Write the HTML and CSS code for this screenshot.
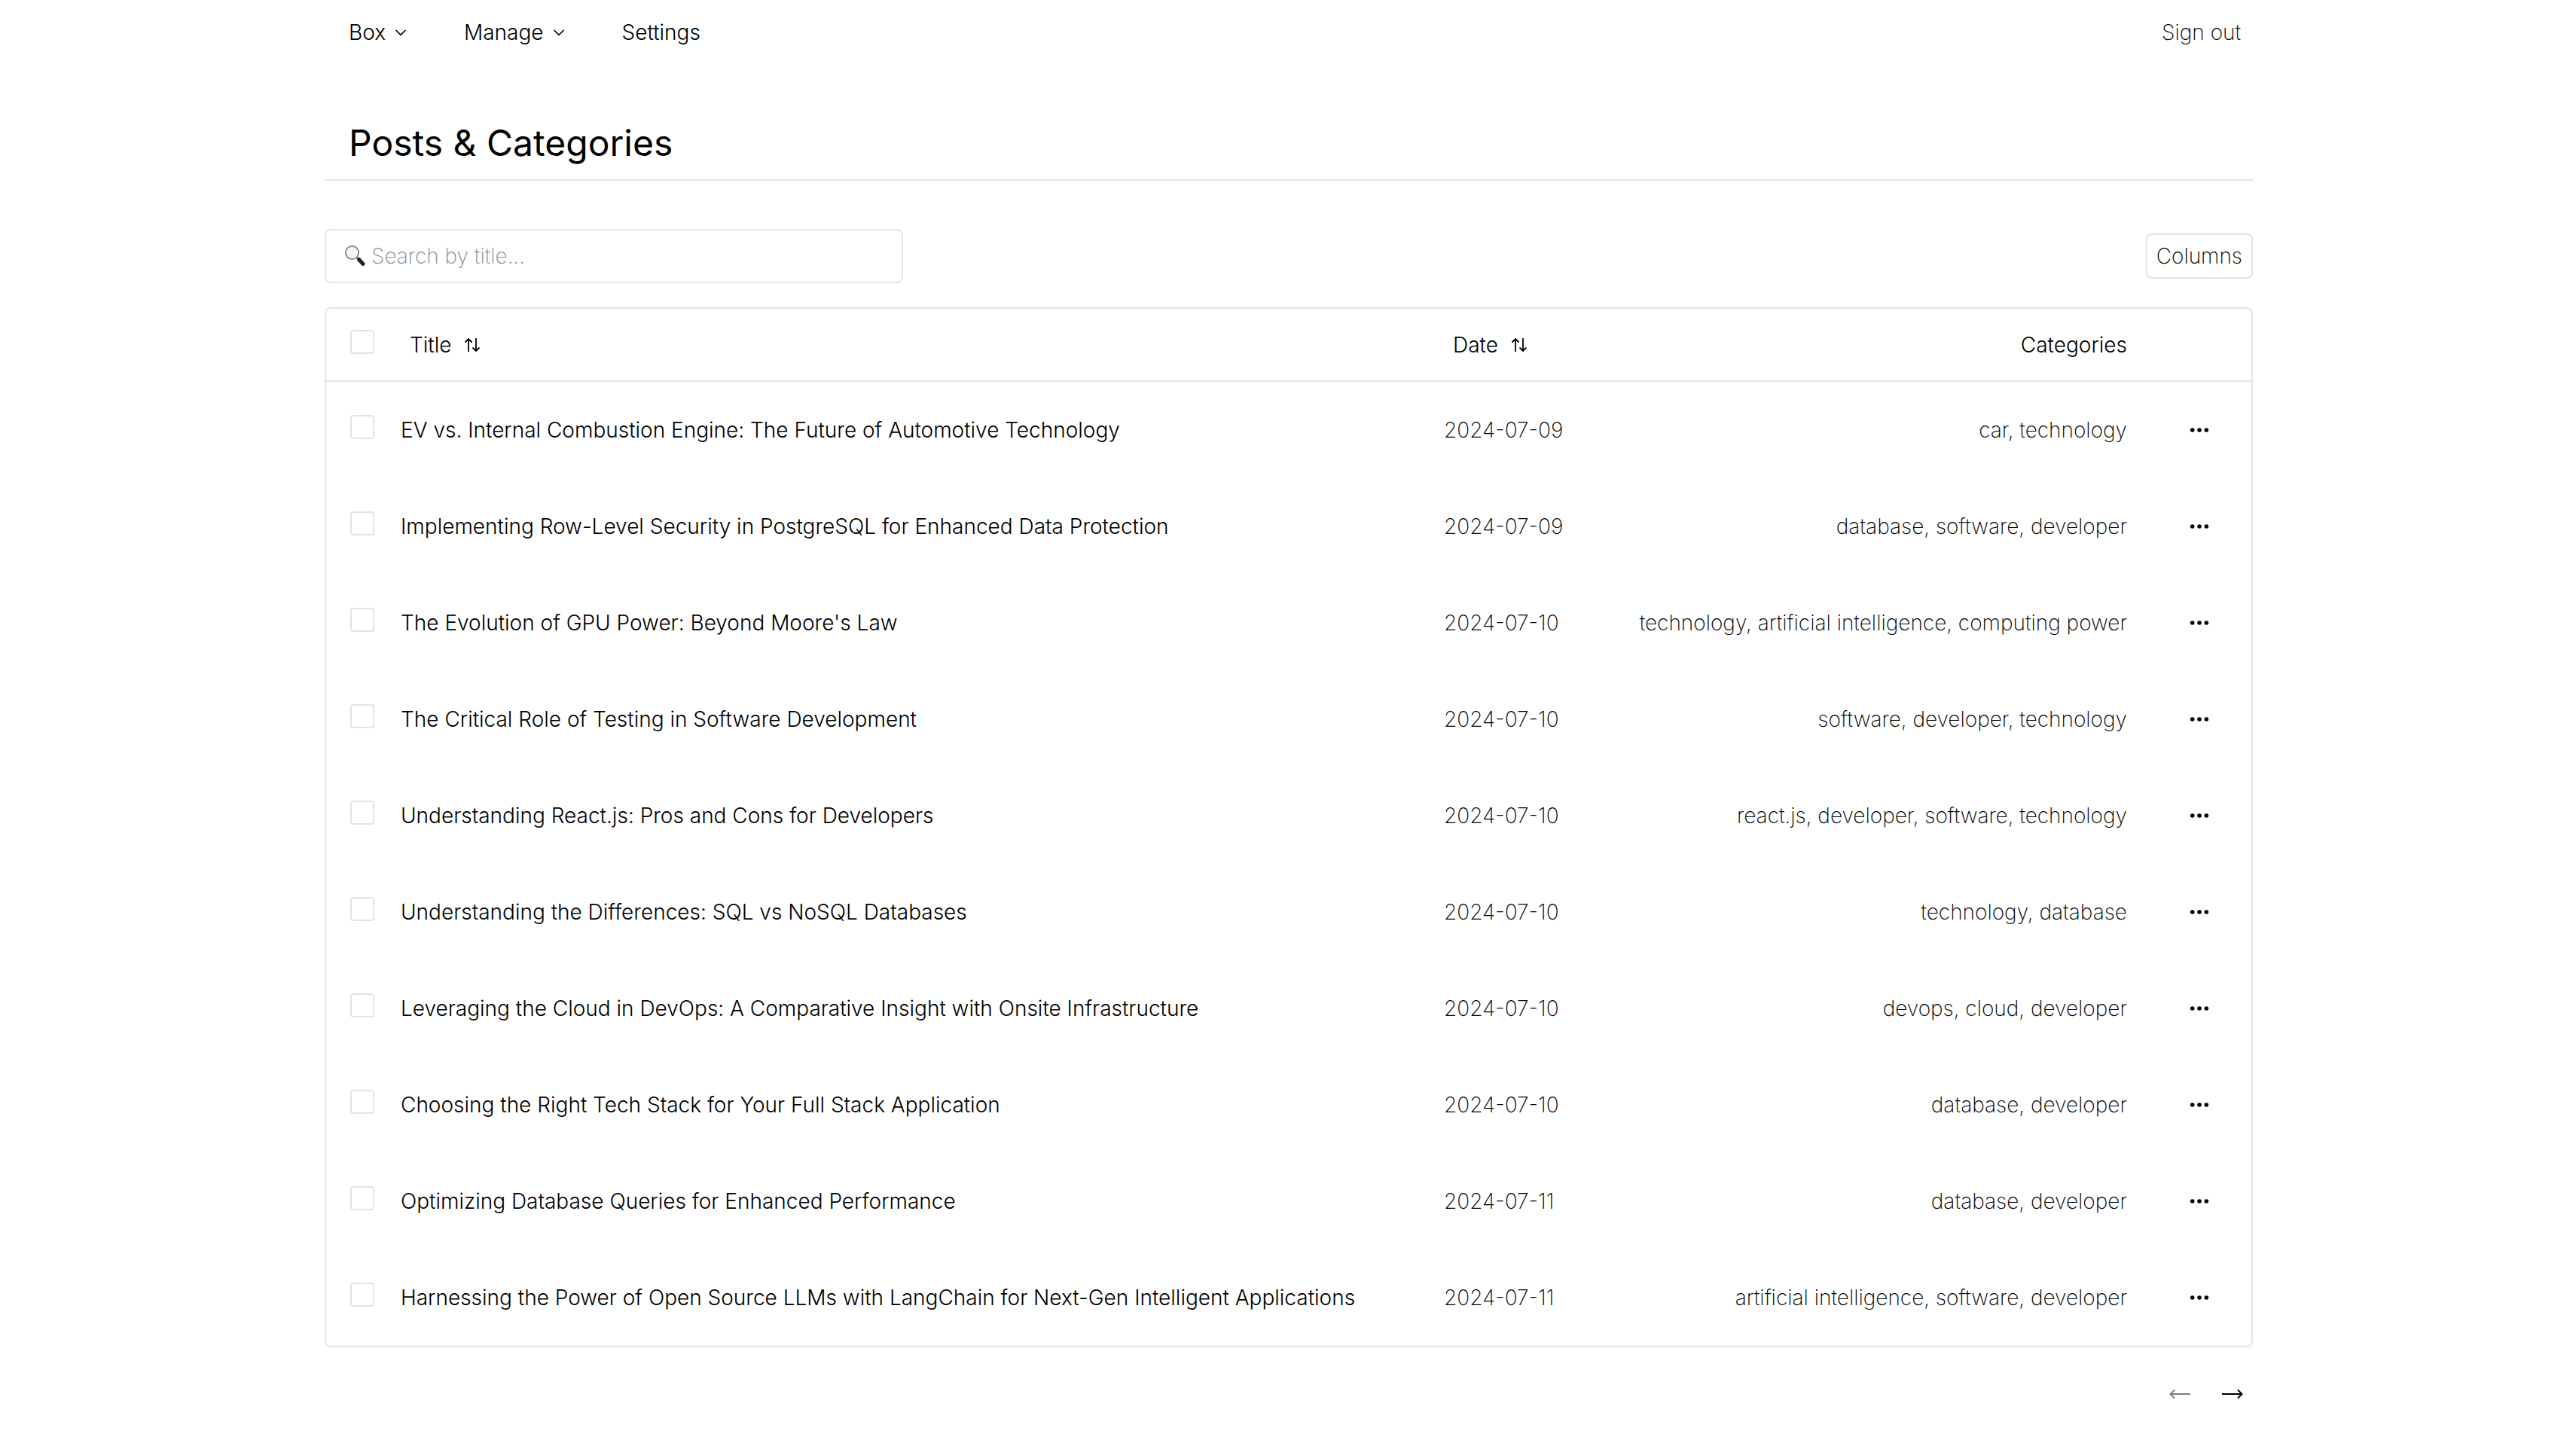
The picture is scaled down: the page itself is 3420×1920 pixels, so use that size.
FILE: index.html
```html
<!DOCTYPE html>
<html lang="en">
<head>
<meta charset="utf-8">
<title>Posts &amp; Categories</title>
<link rel="stylesheet" href="styles.css">
</head>
<body>
<svg class="sprite" aria-hidden="true">
  <symbol id="chevron" viewBox="0 0 24 24"><path d="m5.500 9 6.500 6.300L18.500 9" fill="none" stroke="currentColor" stroke-width="1.700"/></symbol>
  <symbol id="sort" viewBox="0 0 24 24"><path d="M7 21V4M2.500 8.500 7 4l4.500 4.500M17 3v17M12.500 15.500 17 20l4.500-4.500" fill="none" stroke="currentColor" stroke-width="1.800"/></symbol>
  <symbol id="dots" viewBox="0 0 30 30"><g fill="currentColor"><circle cx="5.700" cy="15" r="2.800"/><circle cx="15" cy="15" r="2.800"/><circle cx="24.300" cy="15" r="2.800"/></g></symbol>
</svg>
<div class="page">
  <header class="topbar">
    <nav class="menu">
      <button class="menu-item" type="button">Box <svg class="chevron"><use href="#chevron"/></svg></button>
      <button class="menu-item" type="button">Manage <svg class="chevron"><use href="#chevron"/></svg></button>
      <a class="menu-item" href="#settings">Settings</a>
    </nav>
    <button class="signout" type="button">Sign out</button>
  </header>
  <main>
    <h1 class="heading">Posts &amp; Categories</h1>
    <div class="toolbar">
      <label class="search">
        <svg class="lens" viewBox="0 0 28 28" aria-hidden="true">
          <path d="m17 16 3 3" stroke="#8b9297" stroke-width="3"/>
          <path d="m19.500 18.500 5.500 6" stroke="#202427" stroke-width="5" stroke-linecap="round"/>
          <circle cx="10.500" cy="9.500" r="8.700" fill="#f4f5f5" stroke="#7d8891" stroke-width="1.800"/>
        </svg>
        <input class="search-input" type="text" placeholder="Search by title..." aria-label="Search by title">
      </label>
      <button class="columns" type="button">Columns</button>
    </div>
    <div class="table-frame">
      <table class="posts">
        <colgroup><col class="col-check"><col class="col-title"><col class="col-date"><col><col class="col-actions"></colgroup>
        <thead>
          <tr>
            <th><input class="check" type="checkbox" aria-label="Select all"></th>
            <th><button class="sort" type="button">Title <svg class="sort-icon"><use href="#sort"/></svg></button></th>
            <th><button class="sort" type="button">Date <svg class="sort-icon"><use href="#sort"/></svg></button></th>
            <th class="categories">Categories</th>
            <th></th>
          </tr>
        </thead>
        <tbody>
          <tr><td><input class="check" type="checkbox" aria-label="Select row"></td><td class="title">EV vs. Internal Combustion Engine: The Future of Automotive Technology</td><td>2024-07-09</td><td class="categories">car, technology</td><td><button class="more" type="button" aria-label="Actions"><svg class="dots"><use href="#dots"/></svg></button></td></tr>
          <tr><td><input class="check" type="checkbox" aria-label="Select row"></td><td class="title">Implementing Row-Level Security in PostgreSQL for Enhanced Data Protection</td><td>2024-07-09</td><td class="categories">database, software, developer</td><td><button class="more" type="button" aria-label="Actions"><svg class="dots"><use href="#dots"/></svg></button></td></tr>
          <tr><td><input class="check" type="checkbox" aria-label="Select row"></td><td class="title">The Evolution of GPU Power: Beyond Moore's Law</td><td>2024-07-10</td><td class="categories">technology, artificial intelligence, computing power</td><td><button class="more" type="button" aria-label="Actions"><svg class="dots"><use href="#dots"/></svg></button></td></tr>
          <tr><td><input class="check" type="checkbox" aria-label="Select row"></td><td class="title">The Critical Role of Testing in Software Development</td><td>2024-07-10</td><td class="categories">software, developer, technology</td><td><button class="more" type="button" aria-label="Actions"><svg class="dots"><use href="#dots"/></svg></button></td></tr>
          <tr><td><input class="check" type="checkbox" aria-label="Select row"></td><td class="title">Understanding React.js: Pros and Cons for Developers</td><td>2024-07-10</td><td class="categories">react.js, developer, software, technology</td><td><button class="more" type="button" aria-label="Actions"><svg class="dots"><use href="#dots"/></svg></button></td></tr>
          <tr><td><input class="check" type="checkbox" aria-label="Select row"></td><td class="title">Understanding the Differences: SQL vs NoSQL Databases</td><td>2024-07-10</td><td class="categories">technology, database</td><td><button class="more" type="button" aria-label="Actions"><svg class="dots"><use href="#dots"/></svg></button></td></tr>
          <tr><td><input class="check" type="checkbox" aria-label="Select row"></td><td class="title">Leveraging the Cloud in DevOps: A Comparative Insight with Onsite Infrastructure</td><td>2024-07-10</td><td class="categories">devops, cloud, developer</td><td><button class="more" type="button" aria-label="Actions"><svg class="dots"><use href="#dots"/></svg></button></td></tr>
          <tr><td><input class="check" type="checkbox" aria-label="Select row"></td><td class="title">Choosing the Right Tech Stack for Your Full Stack Application</td><td>2024-07-10</td><td class="categories">database, developer</td><td><button class="more" type="button" aria-label="Actions"><svg class="dots"><use href="#dots"/></svg></button></td></tr>
          <tr><td><input class="check" type="checkbox" aria-label="Select row"></td><td class="title">Optimizing Database Queries for Enhanced Performance</td><td>2024-07-11</td><td class="categories">database, developer</td><td><button class="more" type="button" aria-label="Actions"><svg class="dots"><use href="#dots"/></svg></button></td></tr>
          <tr><td><input class="check" type="checkbox" aria-label="Select row"></td><td class="title">Harnessing the Power of Open Source LLMs with LangChain for Next-Gen Intelligent Applications</td><td>2024-07-11</td><td class="categories">artificial intelligence, software, developer</td><td><button class="more" type="button" aria-label="Actions"><svg class="dots"><use href="#dots"/></svg></button></td></tr>
        </tbody>
      </table>
    </div>
    <div class="pager">
      <button class="page-button" type="button" disabled aria-label="Previous page"><svg class="arrow" viewBox="0 0 30 14"><path d="M29 7H2M8 1.500 2.500 7 8 12.500" fill="none" stroke="currentColor" stroke-width="2"/></svg></button>
      <button class="page-button" type="button" aria-label="Next page"><svg class="arrow" viewBox="0 0 30 14"><path d="M1 7h27M22 1.500 27.500 7 22 12.500" fill="none" stroke="currentColor" stroke-width="2"/></svg></button>
    </div>
  </main>
</div>
</body>
</html>
```
FILE: styles.css
```css
* { box-sizing: border-box; }
body {
  margin: 0;
  padding-left: 2px;
  background: #fff;
  color: #000;
  font: 200 28px/40px Inter, "Liberation Sans", sans-serif;
}
button, input { margin: 0; padding: 0; border: 0; background: none; font: inherit; color: inherit; }
a { color: inherit; text-decoration: none; }
svg { display: block; flex: none; }
.sprite { position: absolute; width: 0; height: 0; }
.page { max-width: 2560px; margin: 0 auto; }

.topbar { display: flex; justify-content: space-between; align-items: center; height: 86px; padding: 0 16px 0 32px; }
.menu { display: flex; gap: 72px; }
.menu-item { display: flex; align-items: center; gap: 8px; font-weight: 300; }
.chevron { width: 24px; height: 24px; }

.heading { margin: 0; padding: 68px 32px 12px; border-bottom: 2px solid #e4e4e7; font-size: 48px; line-height: 72px; font-weight: 400; }

.toolbar { display: flex; justify-content: space-between; align-items: center; margin: 64px 0 32px; }
.search { display: flex; align-items: center; width: 30%; height: 72px; padding: 0 24px; border: 2px solid #e4e4e7; border-radius: 8px; }
.lens { width: 28px; height: 28px; }
.search-input { flex: 1; min-width: 0; margin-left: 8px; outline: 0; }
.search-input::placeholder { color: #868e9e; opacity: 1; }
.columns { height: 60px; padding: 0 12px; border: 2px solid #e4e4e7; border-radius: 8px; }

.table-frame { border: 2px solid #e4e4e7; border-radius: 8px; }
.posts { width: 100%; border-collapse: separate; border-spacing: 0; table-layout: fixed; }
.col-check { width: 99px; }
.col-title { width: 1385px; }
.col-date { width: 200px; }
.col-actions { width: 165px; }
th, td { padding: 0; text-align: left; white-space: nowrap; }
th { height: 97px; border-bottom: 2px solid #e4e4e7; font-weight: 300; }
td { height: 128px; }
th:first-child, td:first-child { padding-left: 32px; }
.title { font-weight: 300; }
.categories { text-align: right; }
.check { display: block; width: 32px; height: 32px; margin-bottom: 8px; appearance: none; border: 2px solid #e4e4e7; border-radius: 4px; }
.sort { display: flex; align-items: center; gap: 16px; padding-left: 12px; }
.sort-icon { width: 24px; height: 24px; }
.more { display: block; margin-left: 81px; }
.dots { width: 30px; height: 30px; }

.pager { display: flex; justify-content: flex-end; gap: 40px; padding: 55px 12px; }
.arrow { width: 30px; height: 14px; }
.page-button:disabled { opacity: .5; }
```
